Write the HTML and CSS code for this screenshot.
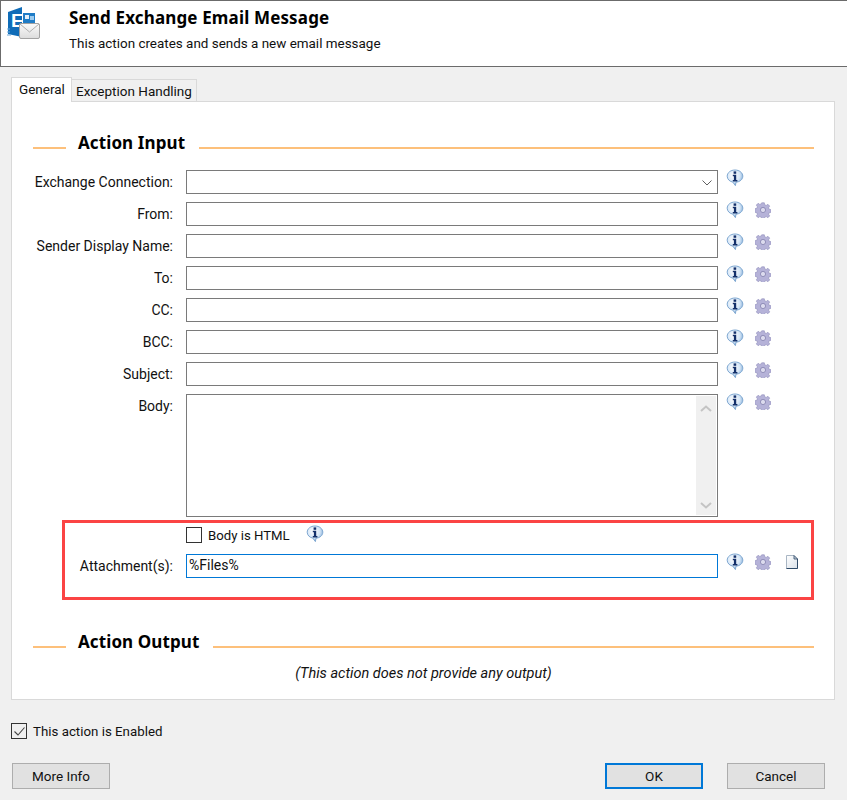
FILE: index.html
```html
<!DOCTYPE html>
<html lang="en">
<head>
    <meta charset="UTF-8">
    <meta name="viewport" content="width=device-width, initial-scale=1.0">
    <title>Send Exchange Email Message</title>
    <link rel="stylesheet" href="styles.css">
</head>
<body>
    <svg class="defs" width="0" height="0">
        <defs>
            <radialGradient id="bubble" cx="40%" cy="35%" r="70%">
                <stop offset="0" stop-color="#ffffff"/>
                <stop offset="0.6" stop-color="#d5e6f7"/>
                <stop offset="1" stop-color="#6f9fd0"/>
            </radialGradient>
            <linearGradient id="paper" x1="0" y1="0" x2="1" y2="1">
                <stop offset="0" stop-color="#ffffff"/>
                <stop offset="1" stop-color="#d9e0e8"/>
            </linearGradient>
            <linearGradient id="envelope" x1="0" y1="0" x2="0" y2="1">
                <stop offset="0" stop-color="#fbfbfb"/>
                <stop offset="1" stop-color="#dcdcdc"/>
            </linearGradient>
            <symbol id="info" viewBox="0 0 18 18">
                <path d="M9 1C4.6 1 1.2 3.7 1.2 7.2c0 3 2.400 5.300 5.600 5.900L9.400 16.600l.6-3.400c3.900-.3 6.800-2.800 6.800-6C16.800 3.700 13.400 1 9 1z" fill="url(#bubble)" stroke="#7ea7d1" stroke-width="1"/>
                <rect x="7.600" y="2.400" width="2.600" height="2.400" fill="#14306a"/>
                <path d="M6.800 5.800h3.400V11h1.200v1.400H6.800V11h1.100V7.200H6.800z" fill="#14306a"/>
            </symbol>
            <symbol id="gear" viewBox="0 0 16 16">
                <path d="M6.700 .8h2.600l.4 2 1.500.6 1.700-1.100 1.800 1.800-1.100 1.700.6 1.500 2 .4v2.600l-2 .4-.6 1.500 1.100 1.700-1.800 1.800-1.700-1.100-1.500.6-.4 2H6.700l-.4-2-1.500-.6-1.700 1.100-1.800-1.800 1.100-1.700-.6-1.500-2-.4V6.700l2-.4.6-1.500-1.100-1.700 1.800-1.800 1.700 1.100 1.500-.6z" fill="#b5b2d8" stroke="#8d8bb8" stroke-width=".6"/>
                <circle cx="8" cy="8" r="2.600" fill="#dcdbee" stroke="#8380ad" stroke-width=".8"/>
            </symbol>
            <symbol id="doc" viewBox="0 0 14 16">
                <path d="M1.500 1.500h7.500l3.500 3.500v9.500h-11z" fill="url(#paper)" stroke="#a9b6c4" stroke-width="1"/>
                <path d="M12.500 5v9.500h-11" fill="none" stroke="#2f4a68" stroke-width="1"/>
                <path d="M9 1.500V5h3.500z" fill="#c9d3de" stroke="#2f4a68" stroke-width=".8"/>
            </symbol>
        </defs>
    </svg>

    <header class="banner">
        <svg class="logo" width="34" height="36" viewBox="0 0 34 36">
            <path d="M1 5 15 0v30L1 27z" fill="#0f6cb8"/>
            <path d="M0 22h3M0 25h3M0 28h4" stroke="#6aa8dc" stroke-width="1"/>
            <rect x="16" y="6" width="12" height="12" fill="#1f7cc6"/>
            <rect x="18" y="8" width="4" height="4" fill="#e4f0fa"/>
            <rect x="23" y="9" width="4" height="4" fill="#9ccbef"/>
            <text x="4" y="20" class="logo-letter">E</text>
            <rect x="12.500" y="16.500" width="20" height="15" rx="1.500" fill="url(#envelope)" stroke="#a3a3a3"/>
            <path d="M13 17 22.500 25 32 17" fill="none" stroke="#b0b0b0"/>
        </svg>
        <div>
            <h1 class="banner-title">Send Exchange Email Message</h1>
            <p class="banner-text">This action creates and sends a new email message</p>
        </div>
    </header>

    <main class="content">
        <div class="tabs">
            <div class="tab tab-active">General</div>
            <div class="tab">Exception Handling</div>
        </div>

        <section class="panel">
            <h2 class="section-title"><span>Action Input</span></h2>

            <div class="form">
                <label>Exchange Connection:</label>
                <div class="field select-field">
                    <svg class="chevron" width="10" height="6" viewBox="0 0 10 6"><path d="M.5.5 5 5 9.500.5" fill="none" stroke="#606060"/></svg>
                </div>
                <div class="tools"><svg class="icon"><use href="#info"/></svg></div>

                <label>From:</label>
                <div class="field"></div>
                <div class="tools"><svg class="icon"><use href="#info"/></svg><svg class="icon-gear"><use href="#gear"/></svg></div>

                <label>Sender Display Name:</label>
                <div class="field"></div>
                <div class="tools"><svg class="icon"><use href="#info"/></svg><svg class="icon-gear"><use href="#gear"/></svg></div>

                <label>To:</label>
                <div class="field"></div>
                <div class="tools"><svg class="icon"><use href="#info"/></svg><svg class="icon-gear"><use href="#gear"/></svg></div>

                <label>CC:</label>
                <div class="field"></div>
                <div class="tools"><svg class="icon"><use href="#info"/></svg><svg class="icon-gear"><use href="#gear"/></svg></div>

                <label>BCC:</label>
                <div class="field"></div>
                <div class="tools"><svg class="icon"><use href="#info"/></svg><svg class="icon-gear"><use href="#gear"/></svg></div>

                <label>Subject:</label>
                <div class="field"></div>
                <div class="tools"><svg class="icon"><use href="#info"/></svg><svg class="icon-gear"><use href="#gear"/></svg></div>

                <label>Body:</label>
                <div class="field field-body">
                    <div class="scrollbar">
                        <svg width="12" height="7" viewBox="0 0 12 7"><path d="M1 6 6 1.500 11 6" fill="none" stroke="#c4c4c4" stroke-width="2"/></svg>
                        <svg width="12" height="7" viewBox="0 0 12 7"><path d="M1 1 6 5.500 11 1" fill="none" stroke="#c4c4c4" stroke-width="2"/></svg>
                    </div>
                </div>
                <div class="tools"><svg class="icon"><use href="#info"/></svg><svg class="icon-gear"><use href="#gear"/></svg></div>

                <div class="spacer"></div>
                <div class="check-row">
                    <span class="checkbox"></span>
                    <span>Body is HTML</span>
                    <svg class="icon check-info"><use href="#info"/></svg>
                </div>
                <div></div>

                <label>Attachment(s):</label>
                <div class="field field-focus">%Files%</div>
                <div class="tools"><svg class="icon"><use href="#info"/></svg><svg class="icon-gear"><use href="#gear"/></svg><svg class="icon-doc"><use href="#doc"/></svg></div>

                <div class="highlight"></div>
            </div>

            <h2 class="section-title section-output"><span>Action Output</span></h2>
            <p class="no-output">(This action does not provide any output)</p>
        </section>

        <div class="enabled-row">
            <span class="checkbox checkbox-small">
                <svg width="13" height="11" viewBox="0 0 13 11"><path d="M1.500 5.500 5 9 11.500 1.500" fill="none" stroke="#444" stroke-width="1.100"/></svg>
            </span>
            <span>This action is Enabled</span>
        </div>

        <footer class="buttons">
            <button type="button">More Info</button>
            <div class="buttons-right">
                <button type="button" class="btn-default">OK</button>
                <button type="button">Cancel</button>
            </div>
        </footer>
    </main>
</body>
</html>
```

FILE: styles.css
```css
* {
    box-sizing: border-box;
}
html, body {
    height: 800px;
    overflow: hidden;
}
body {
    margin: 0;
    background-color: #f0f0f0;
    font-family: Roboto, "Noto Sans", Arial, sans-serif;
    font-size: 14px;
    color: #111;
}
.defs {
    position: absolute;
}
.banner {
    display: flex;
    height: 67px;
    padding: 6px 0 0 6px;
    gap: 28px;
    background-color: #fff;
    border: 1px solid #6b6b6b;
    border-right: none;
}
.logo {
    flex: none;
}
.logo-letter {
    font-family: "Liberation Sans", Arial, sans-serif;
    font-size: 19px;
    font-weight: bold;
    fill: #fff;
}
.banner-title {
    margin: 0;
    font-family: "Noto Sans", Arial, sans-serif;
    font-size: 17px;
    line-height: 22px;
    letter-spacing: .15px;
    font-weight: bold;
    color: #000;
}
.banner-text {
    margin: 6px 0 0;
    font-size: 13.45px;
    line-height: 18px;
}
.content {
    padding: 10px 12px 0 11px;
}
.tabs {
    display: flex;
    align-items: flex-end;
    height: 25px;
    position: relative;
    z-index: 1;
    font-size: 13.5px;
}
.tab {
    height: 23px;
    padding: 2px 4px 0;
    background-color: #f0f0f0;
    border: 1px solid #d9d9d9;
    border-left: none;
    line-height: 18px;
}
.tab-active {
    height: 25px;
    width: 61px;
    padding: 2px 0 0 7px;
    background-color: #fff;
    border: 1px solid #d9d9d9;
    border-bottom: none;
}
.panel {
    height: 599px;
    margin-top: -1px;
    padding: 30px 20px 0 21px;
    background-color: #fff;
    border: 1px solid #d9d9d9;
}
.section-title {
    display: flex;
    align-items: center;
    height: 22px;
    margin: 0;
    font-family: "Noto Sans", Arial, sans-serif;
    font-size: 17px;
    line-height: 22px;
    letter-spacing: .1px;
    font-weight: bold;
    color: #000;
}
.section-title::before,
.section-title::after {
    content: "";
    height: 2px;
    margin-top: 10px;
    background-color: #fdc07b;
}
.section-title::before {
    width: 33px;
    margin-right: 12px;
}
.section-title::after {
    flex: 1;
    margin-left: 14px;
}
.form {
    position: relative;
    display: grid;
    grid-template-columns: 140px 532px 1fr;
    column-gap: 13px;
    row-gap: 8px;
    margin-top: 16px;
}
.form label {
    padding-top: 2px;
    text-align: right;
    line-height: 20px;
}
.field {
    position: relative;
    height: 24px;
    background-color: #fff;
    border: 1px solid #7a7a7a;
}
.field-body {
    height: 123px;
    margin-bottom: -1px;
}
.field-focus {
    padding-left: 2px;
    line-height: 21px;
    border-color: #0078d7;
}
.chevron {
    position: absolute;
    top: 9px;
    right: 5px;
}
.scrollbar {
    position: absolute;
    top: 1px;
    right: 1px;
    bottom: 1px;
    display: flex;
    flex-direction: column;
    justify-content: space-between;
    align-items: center;
    width: 20px;
    padding: 9px 0 6px;
    background-color: #f0f0f0;
}
.tools {
    display: flex;
    align-items: flex-start;
    margin: -1px 0 0 -5px;
}
.icon {
    width: 18px;
    height: 18px;
    flex: none;
}
.icon-gear {
    width: 16px;
    height: 16px;
    margin: 1px 0 0 11px;
    flex: none;
}
.icon-doc {
    width: 14px;
    height: 16px;
    margin: 1px 0 0 14px;
    flex: none;
}
.check-row {
    display: flex;
    align-items: center;
    height: 22px;
    gap: 6px;
    font-size: 13.2px;
}
.check-info {
    margin: -3px 0 0 10px;
}
.spacer {
    height: 22px;
}
.checkbox {
    display: block;
    flex: none;
    width: 16px;
    height: 16px;
    background-color: #fff;
    border: 1px solid #333;
}
.highlight {
    position: absolute;
    left: 29px;
    right: 0;
    top: 350px;
    height: 80px;
    border: 3px solid #fb4444;
    pointer-events: none;
}
.section-output {
    margin-top: 53px;
}
.no-output {
    margin: 11px 0 0;
    font-size: 14.5px;
    font-style: italic;
    text-align: center;
    line-height: 20px;
}
.enabled-row {
    display: flex;
    align-items: center;
    gap: 6px;
    height: 20px;
    margin-top: 21px;
    font-size: 13.3px;
}
.checkbox-small {
    display: flex;
    align-items: center;
    justify-content: center;
    background-color: #f0f0f0;
}
.buttons {
    display: flex;
    justify-content: space-between;
    margin-top: 22px;
    padding-left: 1px;
    padding-right: 10px;
}
.buttons-right {
    display: flex;
    gap: 24px;
}
button {
    width: 98px;
    height: 26px;
    padding: 0;
    background-color: #e1e1e1;
    border: 1px solid #adadad;
    font-family: inherit;
    font-size: 13.5px;
    color: #111;
}
.btn-default {
    border: 2px solid #0078d7;
}
```
